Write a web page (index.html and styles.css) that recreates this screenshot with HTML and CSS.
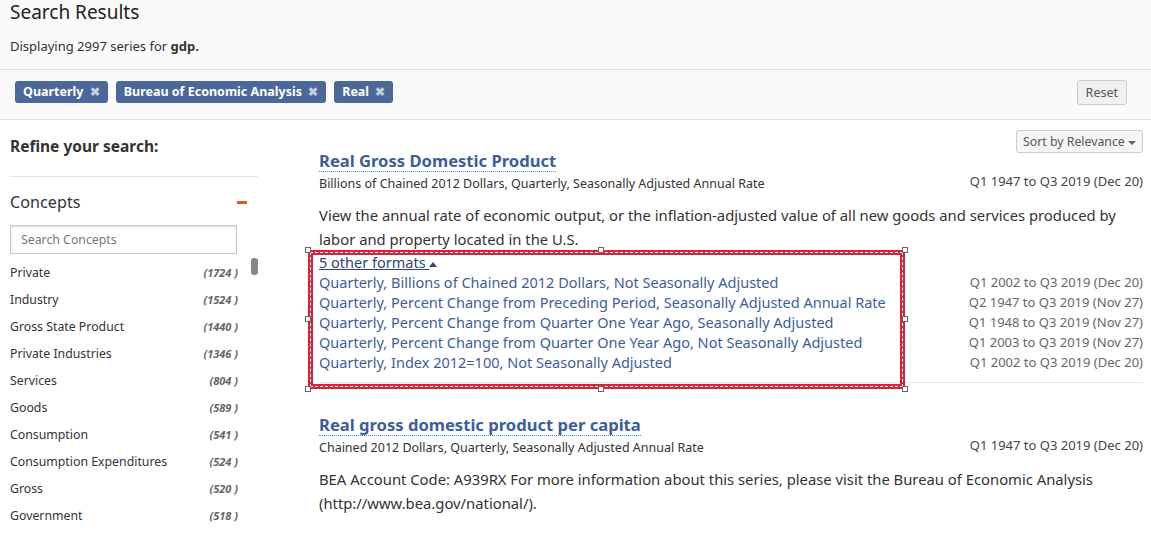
FILE: index.html
```html
<!DOCTYPE html>
<html lang="en">
<head>
    <meta charset="UTF-8">
    <title>Search Results</title>
    <link rel="stylesheet" href="styles.css">
</head>
<body>
    <!-- page heading -->
    <div class="results-head">
        <h1>Search Results</h1>
        <p class="count">Displaying 2997 series for <b>gdp.</b></p>
    </div>

    <!-- active filters -->
    <div class="filter-bar">
        <div class="tags">
            <span class="tag">Quarterly <span class="x">&#10006;</span></span>
            <span class="tag">Bureau of Economic Analysis <span class="x">&#10006;</span></span>
            <span class="tag">Real <span class="x">&#10006;</span></span>
        </div>
        <button class="reset">Reset</button>
    </div>

    <div class="page">
        <aside class="sidebar">
            <h3 class="refine">Refine your search:</h3>
            <div class="facet-head">
                <span>Concepts</span>
                <span class="minus"></span>
            </div>
            <input class="facet-search" type="text" placeholder="Search Concepts">
            <div class="facet-wrap">
                <ul class="facet-list">
                    <li><span>Private</span><i>(1724 )</i></li>
                    <li><span>Industry</span><i>(1524 )</i></li>
                    <li><span>Gross State Product</span><i>(1440 )</i></li>
                    <li><span>Private Industries</span><i>(1346 )</i></li>
                    <li><span>Services</span><i>(804 )</i></li>
                    <li><span>Goods</span><i>(589 )</i></li>
                    <li><span>Consumption</span><i>(541 )</i></li>
                    <li><span>Consumption Expenditures</span><i>(524 )</i></li>
                    <li><span>Gross</span><i>(520 )</i></li>
                    <li><span>Government</span><i>(518 )</i></li>
                </ul>
                <div class="thumb"></div>
            </div>
        </aside>

        <main class="results">
            <div class="sort-row">
                <button class="sort">Sort by Relevance <span class="caret"></span></button>
            </div>

            <div class="result">
                <a class="title" href="#">Real Gross Domestic Product</a>
                <div class="meta">
                    <span class="units">Billions of Chained 2012 Dollars, Quarterly, Seasonally Adjusted Annual Rate</span>
                    <span class="range">Q1 1947 to Q3 2019 (Dec 20)</span>
                </div>
                <p class="desc">View the annual rate of economic output, or the inflation-adjusted value of all new goods and services produced by labor and property located in the U.S.</p>

                <div class="formats">
                    <div class="format-links">
                        <a class="toggle" href="#">5 other formats <span class="up"></span></a>
                        <a href="#">Quarterly, Billions of Chained 2012 Dollars, Not Seasonally Adjusted</a>
                        <a href="#">Quarterly, Percent Change from Preceding Period, Seasonally Adjusted Annual Rate</a>
                        <a href="#">Quarterly, Percent Change from Quarter One Year Ago, Seasonally Adjusted</a>
                        <a href="#">Quarterly, Percent Change from Quarter One Year Ago, Not Seasonally Adjusted</a>
                        <a href="#">Quarterly, Index 2012=100, Not Seasonally Adjusted</a>
                    </div>
                    <div class="format-dates">
                        <span>Q1 2002 to Q3 2019 (Dec 20)</span>
                        <span>Q2 1947 to Q3 2019 (Nov 27)</span>
                        <span>Q1 1948 to Q3 2019 (Nov 27)</span>
                        <span>Q1 2003 to Q3 2019 (Nov 27)</span>
                        <span>Q1 2002 to Q3 2019 (Dec 20)</span>
                    </div>
                    <!-- editor selection frame -->
                    <div class="select-box">
                        <span class="h h-tl"></span><span class="h h-tm"></span><span class="h h-tr"></span>
                        <span class="h h-ml"></span><span class="h h-mr"></span>
                        <span class="h h-bl"></span><span class="h h-bm"></span><span class="h h-br"></span>
                    </div>
                </div>
            </div>

            <div class="result">
                <a class="title" href="#">Real gross domestic product per capita</a>
                <div class="meta">
                    <span class="units">Chained 2012 Dollars, Quarterly, Seasonally Adjusted Annual Rate</span>
                    <span class="range">Q1 1947 to Q3 2019 (Dec 20)</span>
                </div>
                <p class="desc">BEA Account Code: A939RX For more information about this series, please visit the Bureau of Economic Analysis (http://www.bea.gov/national/).</p>
            </div>
        </main>
    </div>
</body>
</html>
```

FILE: styles.css
```css
body {
    margin: 0;
    font-family: "Noto Sans", "Open Sans", sans-serif;
    color: #333;
    background-color: #fff;
    overflow: hidden;
}
.results-head {
    background-color: #fafafa;
    padding: 0 10px;
    height: 69px;
    border-bottom: 1px solid #ddd;
}
.results-head h1 {
    margin: 0;
    font-size: 19px;
    font-weight: normal;
    line-height: 24px;
    color: #222;
}
.count {
    margin: 12px 0 0;
    font-size: 13px;
    line-height: 20px;
}
.filter-bar {
    display: flex;
    justify-content: space-between;
    align-items: center;
    height: 44px;
    padding: 0 24px 5px 15px;
    background-color: #fafafa;
    border-bottom: 1px solid #e3e3e3;
}
.tags {
    display: flex;
    gap: 8px;
}
.tag {
    background-color: #4a6898;
    color: #fff;
    font-weight: bold;
    font-size: 12.5px;
    line-height: 22px;
    padding: 0 8px;
    border-radius: 3px;
}
.tag .x {
    color: #c5cde0;
    font-size: 11.5px;
    margin-left: 3px;
}
.reset {
    font-family: inherit;
    font-size: 12.5px;
    color: #555;
    background-color: #f0f0f0;
    border: 1px solid #ccc;
    border-radius: 3px;
    height: 25px;
    padding: 0 8px;
}
.page {
    display: grid;
    grid-template-columns: 248px 1fr;
    column-gap: 61px;
    padding: 0 8px 0 10px;
}
.refine {
    margin: 16px 0 0;
    font-size: 15.5px;
    line-height: 20px;
    border-bottom: 1px solid #e5e5e5;
    padding-bottom: 20px;
}
.facet-head {
    display: flex;
    justify-content: space-between;
    align-items: center;
    margin-top: 14px;
    font-size: 16.2px;
    line-height: 22px;
    padding-right: 11px;
}
.minus {
    width: 10px;
    height: 3px;
    background-color: #de5a24;
}
.facet-search {
    display: block;
    box-sizing: border-box;
    width: 227px;
    height: 29px;
    margin-top: 12px;
    padding: 0 10px;
    border: 1px solid #c8c8c8;
    box-shadow: inset 0 1px 2px rgba(0, 0, 0, 0.15);
    font-family: inherit;
    font-size: 12.3px;
}
.facet-search::placeholder {
    color: #777;
}
.facet-wrap {
    position: relative;
}
.facet-list {
    list-style: none;
    margin: 5px 0 0;
    padding: 0 20px 0 0;
}
.facet-list li {
    display: flex;
    justify-content: space-between;
    font-size: 12.3px;
    line-height: 27px;
}
.facet-list i {
    font-size: 11px;
    font-weight: bold;
    color: #666;
}
.thumb {
    position: absolute;
    right: 0;
    top: -1px;
    width: 7px;
    height: 17px;
    border-radius: 3px;
    background-color: #888;
}
.sort-row {
    display: flex;
    justify-content: flex-end;
    align-items: flex-start;
    height: 20px;
    padding-top: 10px;
}
.sort {
    font-family: inherit;
    font-size: 12.3px;
    color: #555;
    background-color: #f5f5f5;
    border: 1px solid #ccc;
    border-radius: 3px;
    height: 23px;
    padding: 0 6px;
}
.caret {
    display: inline-block;
    vertical-align: middle;
    border-left: 4px solid transparent;
    border-right: 4px solid transparent;
    border-top: 4px solid #666;
}
.result {
    padding-bottom: 10px;
    border-bottom: 1px solid #e8e8e8;
}
.result + .result {
    margin-top: 31px;
    border-bottom: none;
}
.title {
    display: inline-block;
    margin-top: -3px;
    font-size: 16.6px;
    font-weight: bold;
    line-height: 21px;
    color: #3d5d9a;
    text-decoration: none;
    border-bottom: 1px dotted #3a8ee0;
}
.meta {
    display: flex;
    justify-content: space-between;
    margin-top: 4px;
}
.units {
    font-size: 12.5px;
    line-height: 16px;
}
.range {
    font-size: 13px;
    line-height: 16px;
    margin-top: -3px;
    color: #444;
}
.desc {
    margin: 11px 0 0;
    font-size: 14.8px;
    line-height: 24px;
}
.formats {
    position: relative;
    display: flex;
    justify-content: space-between;
    margin-top: 1px;
}
.format-links {
    display: flex;
    flex-direction: column;
    align-items: flex-start;
}
.format-links a {
    font-size: 14.5px;
    line-height: 20px;
    color: #3e5c9c;
    text-decoration: none;
}
.format-links .toggle {
    color: #2d4578;
    text-decoration: underline;
}
.up {
    display: inline-block;
    vertical-align: middle;
    border-left: 4px solid transparent;
    border-right: 4px solid transparent;
    border-bottom: 5px solid #2d4578;
}
.format-dates {
    display: flex;
    flex-direction: column;
    align-items: flex-end;
    padding-top: 20px;
}
.format-dates span {
    font-size: 13px;
    line-height: 20px;
    color: #666;
}
.select-box {
    position: absolute;
    left: -11px;
    top: -2px;
    width: 597px;
    height: 139px;
    box-sizing: border-box;
    border: 5px solid #e3202b;
}
.select-box::before,
.select-box::after {
    content: "";
    position: absolute;
    inset: -3px;
}
.select-box::before {
    border: 1px solid #3b5db8;
}
.select-box::after {
    border: 1px dashed #fff;
}
.h {
    position: absolute;
    z-index: 1;
    width: 4px;
    height: 4px;
    background-color: #fff;
    border: 1px solid #666;
}
.h-tl { left: -8px; top: -8px; }
.h-tm { left: 285px; top: -8px; }
.h-tr { right: -8px; top: -8px; }
.h-ml { left: -8px; top: 61px; }
.h-mr { right: -8px; top: 61px; }
.h-bl { left: -8px; bottom: -8px; }
.h-bm { left: 285px; bottom: -8px; }
.h-br { right: -8px; bottom: -8px; }
```
